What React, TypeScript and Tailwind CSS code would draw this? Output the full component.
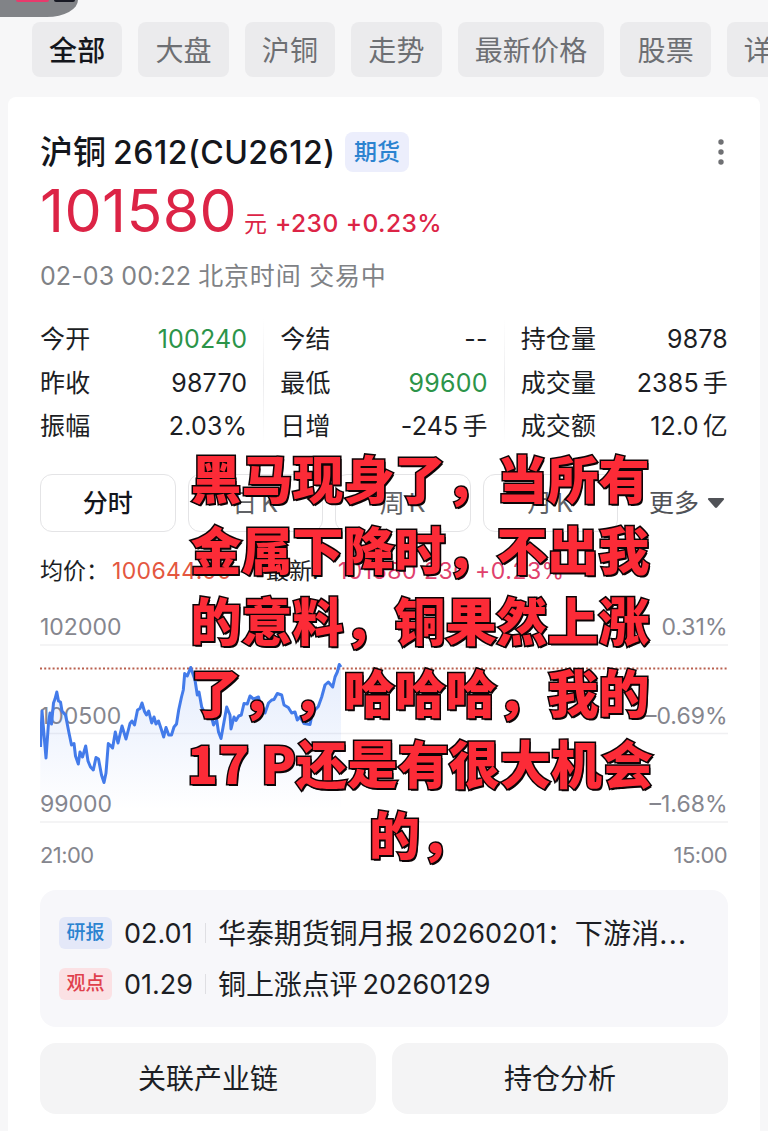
import React from 'react';

type Tone = 'down' | 'plain';

const FILTERS = ['全部', '大盘', '沪铜', '走势', '最新价格', '股票', '详情'];

const STATS: { label: string; value: string; unit?: string; tone?: Tone }[][] = [
  [
    { label: '今开', value: '100240', tone: 'down' },
    { label: '昨收', value: '98770' },
    { label: '振幅', value: '2.03%' },
  ],
  [
    { label: '今结', value: '--' },
    { label: '最低', value: '99600', tone: 'down' },
    { label: '日增', value: '-245', unit: '手' },
  ],
  [
    { label: '持仓量', value: '9878' },
    { label: '成交量', value: '2385', unit: '手' },
    { label: '成交额', value: '12.0', unit: '亿' },
  ],
];

const PERIODS = ['分时', '日K', '周K', '月K'];

const GRID = [
  { y: 45, price: '102000', change: '0.31%' },
  { y: 133.5, price: '100500', change: '–0.69%' },
  { y: 222, price: '99000', change: '–1.68%' },
];

const LINE =
  '0.5,147 2,111 6,158 8.5,123 10,113 11.5,124 13.5,103 15,99 16.8,92 18.5,101 20.5,102 22,111 25.5,115 29,133 31.5,145 34,143.5 35.5,156 38.3,164 40,152 42.5,157 45.7,146 48,161 50.5,167 53.3,170 56,157.5 58.5,159 61.5,175 64,182.5 66,173 68.3,143.5 70,145 72.6,148 75.3,132 78,143 82,126 86,139 90,123.5 92,121 94.5,125 97.5,110 100,108.5 102,103 104.5,111.5 106.5,115 108.7,111 111.7,123 114,117 116,124 118.5,121 121.5,130 123.7,137 126,127.5 128.7,135 131.5,135 134,127 136.5,124 138.7,110 141.5,97 143.3,90 144.7,73.5 147.3,76 150.7,67.5 155,80 157.3,95 159,92 161.7,107 166.5,117 171.5,117 173.5,125 176.7,120 178.5,132 181,138.5 184,122 186.7,107 190,115 191,129 194,117 196,120.5 198.7,116 201.3,115 204,103.5 207.3,104 210,96 213.5,99 218.5,97 221.5,110 225,113 228.5,103 231.7,100 234,99.5 237.3,93.5 241.7,95 244,105 248.3,107.5 251.7,113 255,112 257.3,120 260,117 264,123.5 270,124.5 272,115 275,110 278.3,106.5 281.7,97 285,85 288.3,82 292.7,87 295,77 297.3,72 299.3,64.5 301,67';

const NEWS = [
  { tag: '研报', kind: 'report', date: '02.01', title: '华泰期货铜月报', num: '20260201', rest: '：下游消', clipped: true },
  { tag: '观点', kind: 'view', date: '01.29', title: '铜上涨点评', num: '20260129', rest: '', clipped: false },
];

const CAPTION = [
  '黑马现身了，当所有',
  '金属下降时，不出我',
  '的意料，铜果然上涨',
  '了，，哈哈哈，我的',
  '17 P还是有很大机会',
  '的，',
];

function FilterBar() {
  return (
    <div className="flex h-[55px] gap-4 pl-8">
      {FILTERS.map((name, i) => (
        <button
          key={name}
          className={`shrink-0 rounded-lg bg-[#ebebed] px-[17px] pt-0.5 text-[28px] tracking-[0.2px] ${i === 0 ? 'font-medium text-[#14161c]' : 'text-[#6d6f73]'}`}
        >
          {name}
        </button>
      ))}
    </div>
  );
}

function Quote() {
  return (
    <div>
      <div className="flex h-10 items-center">
        <h1 className="flex items-center pt-0.5 text-[#14161c]">
          <span className="w-[73px] text-[33px] font-medium">沪铜</span>
          <span className="w-[232px] text-[32px] font-medium tracking-[0.5px]">2612(CU2612)</span>
        </h1>
        <span className="flex h-10 w-16 items-center justify-center rounded-lg bg-[#eceefc] text-[23px] font-medium text-[#2b83d0]">
          期货
        </span>
        <svg className="ml-auto" width="14" height="30" viewBox="0 0 14 30" fill="#6f7073">
          <circle cx="7" cy="5" r="2.7" />
          <circle cx="7" cy="15" r="2.7" />
          <circle cx="7" cy="25" r="2.7" />
        </svg>
      </div>
      <div className="flex h-[72px] items-baseline text-[#dc2446]">
        <span className="w-[204px] text-[59px] leading-[78px] tracking-[0.4px]">101580</span>
        <span className="w-[31px] text-[23px]">元</span>
        <span className="text-[24.5px] font-medium tracking-[0.45px]">+230 +0.23%</span>
      </div>
      <p className="mt-[12px] text-[25px] leading-[40px] tracking-[0.1px] text-[#7f8286]">
        02-03 00:22 <span className="tracking-[0.8px]">北京时间 交易中</span>
      </p>
    </div>
  );
}

function Stats() {
  return (
    <div className="mt-[22px] flex">
      {STATS.map((col, i) => (
        <React.Fragment key={i}>
          {i > 0 && <div className="mx-4 h-[126px] w-px bg-linear-to-b from-white via-[#ececee] to-white" />}
          <dl className="flex-1">
            {col.map((s) => (
              <div key={s.label} className="flex h-[43.5px] items-center justify-between text-[25px] tracking-[0.2px] text-[#1c1e24]">
                <dt>{s.label}</dt>
                <dd className={s.tone === 'down' ? 'text-[#2c9449]' : ''}>
                  {s.value}
                  {s.unit && <span className="ml-1">{s.unit}</span>}
                </dd>
              </div>
            ))}
          </dl>
        </React.Fragment>
      ))}
    </div>
  );
}

function Periods() {
  return (
    <div className="mt-[25px] flex h-[58px] items-center gap-3">
      {PERIODS.map((p, i) => (
        <button
          key={p}
          className={`h-full w-[135.5px] shrink-0 rounded-[12px] border-[1.5px] border-[#e4e4e6] pt-0.5 text-[25px] ${i === 0 ? 'font-medium text-[#14161c]' : 'text-[#606266]'}`}
        >
          {p[0]}
          <span className={p[1] === 'K' ? 'ml-1' : ''}>{p[1]}</span>
        </button>
      ))}
      <div className="ml-auto flex items-center gap-2 pr-[3px] text-[25px] text-[#505257]">
        <span className="pt-0.5">更多</span>
        <svg width="18" height="12" viewBox="0 0 18 12" fill="#505257">
          <path d="M2 1h14c1 0 1.4 1 .8 1.8l-6.8 7.7c-.6.6-1.4.6-2 0L1.2 2.800C.6 2 1 1 2 1z" />
        </svg>
      </div>
    </div>
  );
}

function Chart() {
  return (
    <div>
      <div className="mt-[20px] flex h-10 items-center text-[23px]">
        <span className="w-[72px] text-[#1c1e24]">均价：</span>
        <span className="w-[154px] tracking-[0.35px] text-[#e4573f]">100644.00</span>
        <span className="w-[72px] text-[#1c1e24]">最新:</span>
        <span className="tracking-[0.5px] text-[#e0406c]">101580 230 +0.23%</span>
      </div>
      <svg className="mt-2 block" width="688" height="280" viewBox="0 0 688 280" fontSize="23" fill="#85868e">
        <defs>
          <linearGradient id="area" x1="0" y1="0" x2="0" y2="1">
            <stop offset="0" stopColor="#3f78ee" stopOpacity="0.14" />
            <stop offset="1" stopColor="#3f78ee" stopOpacity="0" />
          </linearGradient>
        </defs>
        {GRID.map((g) => (
          <g key={g.y}>
            <line x1="0" x2="688" y1={g.y} y2={g.y} stroke="#f0f0f2" strokeWidth="1.3" />
            <text x="0" y={g.y - 10}>{g.price}</text>
            <text x="687.5" y={g.y - 10} textAnchor="end">{g.change}</text>
          </g>
        ))}
        <polygon points={`0,210 ${LINE} 301,210`} fill="url(#area)" />
        <line x1="0" x2="687" y1="68.5" y2="68.5" stroke="#b9604f" strokeWidth="2" strokeDasharray="2 2.2" />
        <polyline points={LINE} fill="none" stroke="#437bea" strokeWidth="3" strokeLinejoin="round" />
        <text x="0" y="263" fontSize="22" letterSpacing="-0.6">21:00</text>
        <text x="687" y="263" fontSize="22" letterSpacing="-0.6" textAnchor="end">15:00</text>
      </svg>
    </div>
  );
}

function News() {
  return (
    <div className="mt-[10px] h-[137px] rounded-[16px] bg-[#f7f7fa] px-[19px] pt-[18px]">
      {NEWS.map((n) => (
        <div key={n.date} className="flex h-[51px] items-center text-[27px] whitespace-nowrap text-[#1c1e24]">
          <span
            className={`flex h-[32px] w-[53px] items-center justify-center rounded-md text-[19px] font-medium ${n.kind === 'report' ? 'bg-[#e4e8f8] text-[#2b83d0]' : 'bg-[#fbe1e4] text-[#e0404c]'}`}
          >
            {n.tag}
          </span>
          <span className="ml-3 w-[81px] pt-0.5">{n.date}</span>
          <span className="mr-[12px] h-5 w-px bg-[#dfdfe3]" />
          <span className="pt-0.5 text-[28px] tracking-[-0.1px]">{n.title}</span>
          <span className="ml-[5px] pt-0.5">{n.num}</span>
          <span className="pt-0.5 text-[28px] tracking-[0.2px]">{n.rest}</span>
          {n.clipped && <span className="pt-0.5 text-[28px] tracking-[1.2px]">...</span>}
        </div>
      ))}
    </div>
  );
}

function Actions() {
  return (
    <div className="mt-4 flex gap-4 text-[28px] text-[#1c1e24]">
      <button className="h-[71px] flex-1 rounded-[16px] bg-[#f4f4f5] pt-0.5">关联产业链</button>
      <button className="h-[71px] flex-1 rounded-[16px] bg-[#f4f4f5] pt-0.5">持仓分析</button>
    </div>
  );
}

// Caption lies over the quote card, centred line by line
function Caption() {
  return (
    <div
      lang="zh-CN"
      className="pointer-events-none absolute top-[442px] left-0 w-[840px] text-center font-['Noto_Sans_CJK_SC',sans-serif] text-[51px] leading-[71.200px] font-black whitespace-pre text-[#fc2b37] [-webkit-text-stroke:3px_#0c0406] [paint-order:stroke_fill] [text-shadow:1.5px_1.5px_0_#0c0406] [text-spacing-trim:space-all]"
    >
      {CAPTION.map((line) => (
        <div key={line}>{line}</div>
      ))}
    </div>
  );
}

export default function App() {
  return (
    <div className="relative h-[1131px] w-[768px] overflow-hidden bg-[#f7f7f8] pt-[22px] font-['Inter','Noto_Sans_CJK_SC',sans-serif]">
      <div className="absolute top-0 left-0 h-[17px] w-[78px] overflow-hidden bg-[#818387] [border-bottom-right-radius:31px_17px]">
        <div className="absolute top-0 left-4 h-[2px] w-[33px] rounded-b bg-[#e83a6c]" />
        <div className="absolute top-0 left-[54px] h-[2px] w-[21px] rounded-b bg-[#181a24]" />
      </div>
      <FilterBar />
      <main className="mx-2 mt-5 h-[1040px] rounded-t-lg bg-white px-8 pt-[35px]">
        <Quote />
        <Stats />
        <Periods />
        <Chart />
        <News />
        <Actions />
      </main>
      <Caption />
    </div>
  );
}
